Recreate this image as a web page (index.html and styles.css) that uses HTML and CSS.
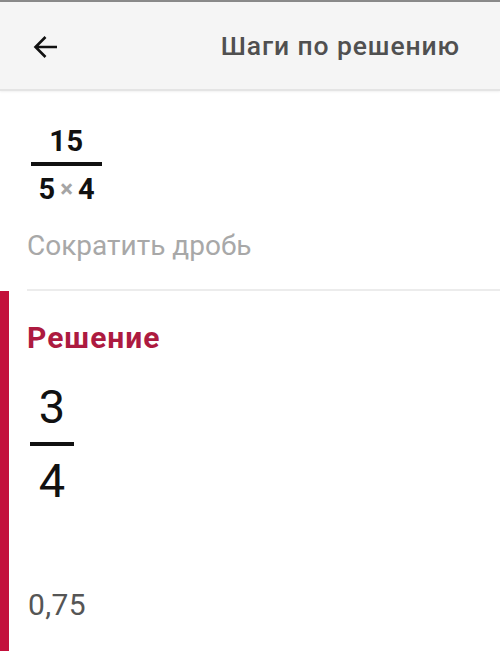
FILE: index.html
```html
<!DOCTYPE html>
<html lang="ru">
<head>
<meta charset="utf-8">
<link rel="stylesheet" href="styles.css">
</head>
<body>
<div class="topline"></div>
<header class="bar">
  <svg class="back" width="26" height="26" viewBox="0 0 26 26"><path d="M25 13H3.5M13.5 3L3.5 13l10 10" fill="none" stroke="#111" stroke-width="2.6"/></svg>
  <span class="title">Шаги по решению</span>
</header>
<section class="problem">
  <div class="frac small">
    <span class="num">15</span>
    <span class="line"></span>
    <span class="den">5<span class="times">×</span>4</span>
  </div>
  <p class="hint">Сократить дробь</p>
</section>
<div class="divider"></div>
<section class="solution">
  <h2 class="sol-title">Решение</h2>
  <div class="frac big">
    <span class="num">3</span>
    <span class="line"></span>
    <span class="den">4</span>
  </div>
  <p class="decimal">0,75</p>
</section>
</body>
</html>
```
FILE: styles.css
```css
html, body { margin: 0; padding: 0; }
body {
  width: 500px;
  height: 651px;
  overflow: hidden;
  background: #fff;
  font-family: Roboto, "Liberation Sans", sans-serif;
}
.topline { height: 2px; background: #8a8a8a; }
.bar {
  height: 87px;
  background: #f5f5f5;
  border-bottom: 2px solid #e4e4e4;
  display: flex;
  align-items: center;
  justify-content: space-between;
  padding: 0 40px 0 32px;
  box-shadow: 0 1px 2px rgba(0,0,0,0.06);
}
.back { display: block; margin-top: 2px; }
.title {
  font-size: 26.5px;
  font-weight: 500;
  color: #505050;
  letter-spacing: 0.9px;
}
.problem { padding: 36px 0 0 31px; }
.frac {
  display: inline-flex;
  flex-direction: column;
  align-items: center;
  color: #111;
}
.frac.small { font-size: 29px; font-weight: 700; width: 71px; }
.frac.small .num { line-height: 28px; letter-spacing: 0.5px; }
.frac.small .line { width: 71px; height: 4px; background: #111; margin: 7px 0 9px; }
.frac.small .den { line-height: 28px; }
.times { color: #a5a5a5; font-size: 24px; margin: 0 5px; vertical-align: 2px; }
.hint {
  margin: 29px 0 0 -4px;
  font-size: 28px;
  color: #a8a8a8;
  line-height: 28px;
}
.divider {
  height: 2px;
  background: #ececec;
  margin: 29px 0 0 27px;
}
.solution {
  border-left: 9px solid #c3103b;
  padding: 29px 0 0 18px;
  height: 360px;
  box-sizing: border-box;
}
.sol-title {
  margin: 0;
  font-size: 30px;
  font-weight: 700;
  color: #ad1a40;
  line-height: 36px;
  letter-spacing: 1px;
}
.frac.big { font-size: 47px; font-weight: 400; margin: 28px 0 0 3px; width: 44px; }
.frac.big .num { line-height: 46px; }
.frac.big .line { width: 44px; height: 4px; background: #111; margin: 12px 0 12px; }
.frac.big .den { line-height: 46px; }
.decimal {
  margin: 86px 0 0 1px;
  font-size: 30px;
  color: #555;
  line-height: 30px;
  letter-spacing: 0.4px;
}
```
